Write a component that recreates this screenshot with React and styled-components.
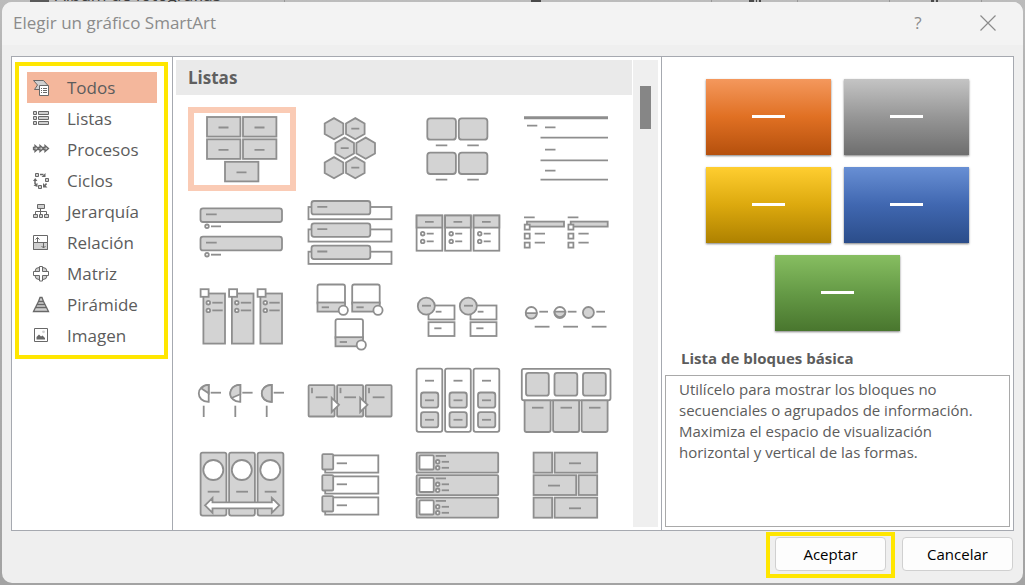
import { useState } from "react";
import styled, { createGlobalStyle } from "styled-components";

const STEPS = [0, 28.5, 57];

const Box = ({ x, y, r = 0, plain }) => (
  <rect x={x[0]} y={y[0]} width={x[1] - x[0]} height={y[1] - y[0]} rx={r} className={plain ? "plain" : undefined} />
);

const Dash = ({ x, y }) => <path d={`M${x[0]} ${y}H${x[1]}`} />;

const Bullet = ({ x, y, to }) => (
  <>
    <circle cx={x} cy={y} r="1.8" className="plain" />
    <Dash x={[x + 4, to]} y={y} />
  </>
);

const Hexagon = ({ x, y, dash }) => (
  <>
    <path d={`M${x} ${y - 10.6}l9.3 5.3v10.6l-9.3 5.3l-9.3 -5.3v-10.6z`} />
    {dash && <Dash x={[x - 4, x + 4]} y={y} />}
  </>
);

const Repeat = ({ steps = STEPS, dy = 0, children }) =>
  steps.map((step) => (
    <g key={step} transform={dy ? `translate(0 ${step})` : `translate(${step} 0)`}>
      {children}
    </g>
  ));

const LAYOUTS = [
  {
    name: "Lista de bloques básica",
    art: (
      <>
        {[[19, 10], [55, 10], [19, 32.3], [55, 32.3], [37, 54.8]].map(([x, y]) => (
          <g key={`${x}-${y}`}>
            <Box x={[x, x + 33.4]} y={[y, y + 19.6]} />
            <Dash x={[x + 11.5, x + 21.5]} y={y + 10.5} />
          </g>
        ))}
      </>
    ),
  },
  {
    name: "Hexágonos alternados",
    art: (
      <>
        <Hexagon x={38} y={21.7} />
        <Hexagon x={59.3} y={21.7} dash />
        <Hexagon x={48.7} y={41.2} dash />
        <Hexagon x={69.7} y={41.2} />
        <Hexagon x={38} y={60.7} />
        <Hexagon x={59.3} y={60.7} dash />
      </>
    ),
  },
  {
    name: "Lista de imágenes con títulos",
    art: (
      <>
        {[[23.3, 11.3], [54.8, 11.3], [23.3, 45.6], [54.8, 45.6]].map(([x, y]) => (
          <g key={`${x}-${y}`}>
            <Box x={[x, x + 28.6]} y={[y, y + 21.4]} r={3} />
            <Dash x={[x + 8.5, x + 20]} y={y + 27} />
          </g>
        ))}
      </>
    ),
  },
  {
    name: "Lista con líneas",
    art: (
      <>
        <path d="M12 10.7H96" className="thick" />
        <Dash x={[15, 25.3]} y={18.7} />
        {[20.3, 42.7, 63.7].map((y) => (
          <Dash key={y} x={[33, 43.5]} y={y} />
        ))}
        <path d="M28.5 30.7H96M28.5 53.3H96M28.5 72.7H96" />
      </>
    ),
  },
  {
    name: "Lista con viñetas verticales",
    art: (
      <Repeat steps={[0, 28.4]} dy={1}>
        <Box x={[12.5, 94]} y={[17.3, 31]} r={2.5} />
        <Dash x={[18, 28.7]} y={23.3} />
        <Bullet x={19} y={35.3} to={33} />
      </Repeat>
    ),
  },
  {
    name: "Lista de cuadros vertical",
    art: (
      <Repeat steps={[0, 22.4, 44.7]} dy={1}>
        <Box x={[12.5, 95.5]} y={[16, 28.2]} plain />
        <Box x={[15.5, 74.3]} y={[10, 23.4]} r={2.5} />
        <Dash x={[21.3, 31.3]} y={15.8} />
      </Repeat>
    ),
  },
  {
    name: "Lista horizontal con viñetas",
    art: (
      <Repeat>
        <Box x={[12.6, 38.3]} y={[24.5, 59.7]} plain />
        <Box x={[12.6, 38.3]} y={[24.5, 36.6]} />
        <Dash x={[21, 29.7]} y={30.8} />
        <Bullet x={18.7} y={42.7} to={29.7} />
        <Bullet x={18.7} y={50.4} to={29.7} />
      </Repeat>
    ),
  },
  {
    name: "Lista de acentos cuadrados",
    art: (
      <Repeat steps={[0, 43.7]}>
        <Dash x={[12, 22.7]} y={26.3} />
        <Box x={[15, 52]} y={[30.6, 35.6]} />
        <Box x={[12.7, 17.7]} y={[33.6, 38.6]} plain />
        <Box x={[12.7, 17.7]} y={[42.6, 47.6]} plain />
        <Box x={[12.7, 17.7]} y={[51.6, 56.6]} plain />
        <Dash x={[22.7, 33]} y={42.7} />
        <Dash x={[22.7, 33]} y={51.7} />
      </Repeat>
    ),
  },
  {
    name: "Lista de énfasis con imágenes",
    art: (
      <Repeat>
        <Box x={[15.4, 37]} y={[18.5, 68.6]} />
        <Box x={[12.6, 20.6]} y={[14.2, 21.8]} plain />
        <Bullet x={20.3} y={27.7} to={34.7} />
        <Bullet x={20.3} y={35.4} to={34.7} />
      </Repeat>
    ),
  },
  {
    name: "Lista de imágenes curvadas",
    art: (
      <>
        {[[0, 0], [34.7, 0], [18, 34.7]].map(([x, y]) => (
          <g key={x} transform={`translate(${x} ${y})`}>
            <Box x={[21.5, 49]} y={[9.5, 30]} r={2} plain />
            <Box x={[21.5, 49]} y={[27.5, 36.6]} />
            <Dash x={[25.7, 33]} y={32.3} />
            <circle cx="47.3" cy="35.3" r="4.6" className="plain" />
          </g>
        ))}
      </>
    ),
  },
  {
    name: "Lista con círculos apilados",
    art: (
      <Repeat steps={[0, 42]}>
        <Box x={[24.5, 50.5]} y={[30.5, 44.5]} plain />
        <Box x={[24.5, 50.5]} y={[47.2, 61]} plain />
        <circle cx="22.3" cy="31.2" r="8.5" />
        <Dash x={[18, 27]} y={30.7} />
        <Dash x={[31.7, 37.5]} y={36.7} />
        <Dash x={[30.3, 37.5]} y={53.3} />
      </Repeat>
    ),
  },
  {
    name: "Proceso de círculo creciente",
    art: (
      <>
        <Repeat>
          <Dash x={[27.3, 36]} y={36.7} />
          <Dash x={[22.7, 37.5]} y={51.7} />
        </Repeat>
        <circle cx="19.3" cy="37.5" r="5.5" className="plain" />
        <path d="M13.8 38.2A5.5 5.5 0 0 0 24.8 38.2Z" />
        <circle cx="47.9" cy="37.5" r="5.5" className="plain" />
        <path d="M42.4 36.6A5.5 5.5 0 1 0 53.4 36.6Z" />
        <circle cx="76.4" cy="37.5" r="5.5" />
      </>
    ),
  },
  {
    name: "Proceso circular parcial",
    art: (
      <>
        <Repeat steps={[0, 31.6, 63]}>
          <path d="M20.7 25.9C7.5 26 7.5 43 20.7 42.8Z" className="plain" />
          <Dash x={[22.7, 33]} y={33.7} />
          <path d="M15.7 46.7V58" />
        </Repeat>
        <path d="M20.7 25.9C17 26 15 27.5 13.5 29.5L20.7 34.3Z" />
        <path d="M52.3 25.9C42.5 26 40.5 34.5 43.6 39L52.3 35.2Z" />
        <path d="M83.7 25.9C70.5 26 70.5 43 83.7 42.8Z" />
      </>
    ),
  },
  {
    name: "Proceso de bloques",
    art: (
      <>
        <Repeat>
          <Box x={[12.6, 38.6]} y={[26.2, 57.5]} r={1} />
          <Dash x={[19.7, 31.5]} y={38.3} />
          <path d="M16 28.8V34.2" />
        </Repeat>
        <Repeat steps={[0, 28.5]}>
          <path d="M35.7 38.8L43 45.8L35.7 53Z" className="plain" />
        </Repeat>
      </>
    ),
  },
  {
    name: "Lista agrupada",
    art: (
      <Repeat>
        <Box x={[12.6, 38.3]} y={[9.6, 72.8]} r={2} plain />
        <Dash x={[21, 30]} y={21.7} />
        <Box x={[17, 34.3]} y={[33.5, 48.7]} r={2.5} />
        <Box x={[17, 34.3]} y={[53.1, 68.4]} r={2.5} />
        <Dash x={[21, 30]} y={41.3} />
        <Dash x={[21, 30]} y={60.8} />
      </Repeat>
    ),
  },
  {
    name: "Lista horizontal de imágenes",
    art: (
      <>
        <Box x={[9.8, 98.5]} y={[9.8, 41.3]} r={2} plain />
        <Repeat>
          <Box x={[14, 36.8]} y={[13.9, 36.7]} r={2.5} />
          <path d="M12.6 41.3H38.6V71A2 2 0 0 1 36.6 73H14.6A2 2 0 0 1 12.6 71Z" />
          <Dash x={[20, 31.5]} y={48.7} />
        </Repeat>
      </>
    ),
  },
  {
    name: "Lista de imágenes continua",
    art: (
      <>
        <Repeat>
          <Box x={[12.6, 38.4]} y={[9.6, 72.6]} r={2} />
          <circle cx="25.3" cy="27" r="10" className="plain" />
          <Dash x={[19.7, 31.5]} y={48.7} />
        </Repeat>
        <path
          d="M17 62.3L24.5 54.9V59.3H83.8V54.9L91.3 62.3L83.8 69.8V65.3H24.5V69.8Z"
          className="plain"
        />
      </>
    ),
  },
  {
    name: "Lista vertical con etiquetas",
    art: (
      <Repeat steps={[0, 21, 42]} dy={1}>
        <Box x={[29.2, 82.3]} y={[12.4, 29.6]} plain />
        <Box x={[26.3, 37.2]} y={[11.2, 26.5]} r={1} />
        <Dash x={[40.7, 51]} y={20.3} />
      </Repeat>
    ),
  },
  {
    name: "Lista vertical de imágenes",
    art: (
      <Repeat steps={[0, 22.5, 45]} dy={1}>
        <Box x={[12.6, 94.2]} y={[9.6, 29.7]} r={1} />
        <Box x={[15.5, 29.7]} y={[12.4, 26.5]} r={1} plain />
        <Dash x={[31.7, 42]} y={12.9} />
        <Bullet x={33.7} y={18.8} to={45} />
        <Bullet x={33.7} y={24.8} to={45} />
      </Repeat>
    ),
  },
  {
    name: "Lista de bloques alternados",
    art: (
      <>
        <Repeat steps={[0, 45]} dy={1}>
          <Box x={[21.6, 40.1]} y={[9.6, 29.7]} />
          <Box x={[42.6, 85.2]} y={[9.6, 29.7]} />
          <Dash x={[57, 69]} y={20.3} />
        </Repeat>
        <Box x={[21.6, 64.2]} y={[32.2, 52]} />
        <Box x={[66.6, 85.2]} y={[32.2, 52]} />
        <Dash x={[36, 48]} y={42.6} />
      </>
    ),
  },
];

const CATEGORIES = [
  {
    label: "Todos",
    icon: (
      <>
        <path d="M.5 .5H10.5L15 5.5L10.5 9.5H1.5L4.5 5Z" />
        <path d="M6.5 5.5H15.5V15.5H6.5Z" className="plain" />
        <path d="M8 8.5H9M10 8.5H14M8 10.5H9M10 10.5H14M8 12.5H9M10 12.5H14" />
      </>
    ),
  },
  {
    label: "Listas",
    icon: (
      <path d="M.5 .5H3.5V3.5H.5ZM5.5 .5H15.5V3.5H5.5ZM.5 5.5H3.5V8.5H.5ZM5.5 5.5H15.5V8.5H5.5ZM.5 10.5H3.5V13.5H.5ZM5.5 10.5H15.5V13.5H5.5Z" />
    ),
  },
  {
    label: "Procesos",
    icon: (
      <g strokeWidth="1.3">
        <path d="M.5 5.5H2V3.5L5.5 6.5L2 9.5V7.5H.5Z" />
        <path d="M5.5 5.5H7V3.5L10.5 6.5L7 9.5V7.5H5.5Z" />
        <path d="M10.5 5.5H12V3.5L15.5 6.5L12 9.5V7.5H10.5Z" />
      </g>
    ),
  },
  {
    label: "Ciclos",
    icon: (
      <>
        <path d="M2.5 .5H5.5V3.5H2.5ZM12.5 5.5H15.5V8.5H12.5ZM5.5 12.5H8.5V15.5H5.5Z" />
        <path d="M7 1.5H10.5M13.5 10.5L12 12.5M2 7V10.5L3.5 12.5" strokeWidth="1.5" className="line" />
        <path d="M12.5 0V4H8.5ZM10 10V14.5H14.5ZM.5 12.5L4.5 10V14ZM0 8L2.2 5L4.4 8Z" className="solid" />
      </>
    ),
  },
  {
    label: "Jerarquía",
    icon: (
      <>
        <path d="M7.5 4.5V10.5M2.5 10.5V7.5H13.5V10.5" className="line" />
        <path d="M4.5 .5H11.5V4.5H4.5ZM.5 10.5H4.5V13.5H.5ZM6.5 10.5H9.5V13.5H6.5ZM11.5 10.5H15.5V13.5H11.5Z" />
      </>
    ),
  },
  {
    label: "Relación",
    icon: (
      <>
        <path d="M.5 .5H14.5V14.5H.5Z" className="plain" />
        <path d="M.5 7.5H14.5V14.5H.5Z" />
        <path d="M4.5 7V2.5M2.5 4.5L4.5 2.5L6.5 4.5M10.5 8V13M8.5 11L10.5 13L12.5 11" className="line" />
      </>
    ),
  },
  {
    label: "Matriz",
    icon: (
      <>
        <rect x="2" y="1.5" width="12" height="12" rx="4" />
        <path d="M6.5 .5H9.5V5.5H15.5V9.5H9.5V15H6.5V9.5H.5V5.5H6.5Z" className="plain" />
      </>
    ),
  },
  {
    label: "Pirámide",
    icon: (
      <path
        d="M7 .5H9L10.5 4.5H5.5ZM5.5 4.5H10.5L12 7.5H4ZM4 7.5H12L13.5 10.5H2.5ZM2.5 10.5H13.5L15.5 14.5H.5Z"
        strokeWidth="1.3"
      />
    ),
  },
  {
    label: "Imagen",
    icon: (
      <>
        <path d="M1.5 .5H14.5V13.5H1.5Z" className="plain" />
        <circle cx="10.5" cy="3.8" r="1.4" stroke="none" />
        <path d="M3.5 11.5V9L6 6.5L8 8.5L9.5 7.5L12 10V11.5Z" className="solid" />
      </>
    ),
  },
];

const PREVIEW_TILES = [
  "#f4985d, #e07023 50%, #b5500d",
  "#c4c4c4, #969696 50%, #6e6e6e",
  "#ffce30, #dca90e 50%, #ae8100",
  "#688fd4, #4067b0 50%, #2b4d8a",
  "#87be61, #659a46 50%, #49762e",
];

const App = () => {
  const [category, setCategory] = useState("Todos");
  const [layout, setLayout] = useState(LAYOUTS[0].name);

  return (
    <Page>
      <GlobalStyle />
      <Ribbon aria-hidden="true">
        <RibbonIcon />
        <RibbonLabel>Álbum de fotografías</RibbonLabel>
        <RibbonMarks>
          <path d="M53.5 0V2M480.5 0V2M566.5 0V2M658.5 0V2M750.5 0V2" stroke="#979797" />
          <path d="M300 1H310M518 1H523M525 1H526M528 1H530M700 1H703M705 1H707" stroke="#4a4a4a" strokeWidth="2" />
        </RibbonMarks>
      </Ribbon>
      <Dialog role="dialog" aria-labelledby="dialog-title">
        <TitleBar>
          <Title id="dialog-title">Elegir un gráfico SmartArt</Title>
          <TitleButton aria-label="Ayuda">?</TitleButton>
          <TitleButton aria-label="Cerrar">
            <svg width="16" height="16" viewBox="0 0 16 16" stroke="currentColor" strokeWidth="1.2">
              <path d="M.5 .5L15.5 15.5M15.5 .5L.5 15.5" />
            </svg>
          </TitleButton>
        </TitleBar>
        <Panels>
          <Sidebar>
            <Highlight>
              {CATEGORIES.map(({ label, icon }) => (
                <Category
                  key={label}
                  $active={label === category}
                  aria-pressed={label === category}
                  onClick={() => setCategory(label)}
                >
                  <CategoryIcon viewBox="0 0 16 16">{icon}</CategoryIcon>
                  {label}
                </Category>
              ))}
            </Highlight>
          </Sidebar>
          <Gallery>
            <GalleryMain>
              <GalleryTitle>Listas</GalleryTitle>
              <Grid>
                {LAYOUTS.map(({ name, art }) => (
                  <Cell
                    key={name}
                    $active={name === layout}
                    aria-label={name}
                    aria-pressed={name === layout}
                    onClick={() => setLayout(name)}
                  >
                    <Thumb viewBox="0 0 108 84">{art}</Thumb>
                  </Cell>
                ))}
              </Grid>
            </GalleryMain>
            <ScrollTrack>
              <ScrollThumb />
            </ScrollTrack>
          </Gallery>
          <Preview>
            <Tiles>
              {PREVIEW_TILES.map((stops) => (
                <Tile key={stops} $stops={stops}>
                  <TileBar />
                </Tile>
              ))}
            </Tiles>
            <PreviewTitle>Lista de bloques básica</PreviewTitle>
            <Description>
              Utilícelo para mostrar los bloques no secuenciales o agrupados de
              información. Maximiza el espacio de visualización horizontal y
              vertical de las formas.
            </Description>
          </Preview>
        </Panels>
        <Footer>
          <ButtonHighlight>
            <Button>Aceptar</Button>
          </ButtonHighlight>
          <Button>Cancelar</Button>
        </Footer>
      </Dialog>
    </Page>
  );
};

const GlobalStyle = createGlobalStyle`
  * {
    box-sizing: border-box;
  }

  body {
    margin: 0;
    font-family: "Open Sans", "Noto Sans", sans-serif;
    color: #5c5c5c;
  }

  button {
    font-family: inherit;
    cursor: pointer;
  }
`;

const Page = styled.div`
  min-height: 100vh;
  display: flex;
  flex-direction: column;
  padding: 0 2px 2px;
  background: linear-gradient(#bcbcbc, #b4b4b4 60px, #a3a3a3);
`;

const Ribbon = styled.div`
  height: 2px;
  padding-left: 28px;
  overflow: hidden;
  display: flex;
  align-items: flex-end;
  gap: 6px;
  color: #3c3c3c;
  font-size: 17px;
  line-height: 14px;
`;

const RibbonIcon = styled.i`
  width: 19px;
  height: 2px;
  background: #5a5a5a;
`;

const RibbonLabel = styled.span`
  flex: 0 0 170px;
`;

const RibbonMarks = styled.svg`
  flex: 1;
  height: 2px;
`;

const Dialog = styled.div`
  flex: 1;
  display: flex;
  flex-direction: column;
  border-radius: 10px;
  overflow: hidden;
  background: #efefef;
`;

const TitleBar = styled.header`
  height: 43px;
  padding: 0 15px 2px 11px;
  display: flex;
  align-items: center;
  gap: 30px;
  background: #f3f3f3;
  color: #8b8b8b;
`;

const Title = styled.h1`
  flex: 1;
  margin: 0;
  font-size: 17px;
  font-weight: 400;
`;

const TitleButton = styled.button`
  width: 40px;
  height: 40px;
  padding: 0;
  border: none;
  background: none;
  color: inherit;
  display: flex;
  align-items: center;
  justify-content: center;
  font-size: 17px;
`;

const Panels = styled.div`
  flex: 1;
  display: flex;
  margin: 11px 9px 0;
  border: 1px solid #a6a9b0;
  background: white;
`;

const Sidebar = styled.nav`
  flex: 0 0 161px;
  padding: 5px 4px 5px 3px;
  border-right: 1px solid #a6a9b0;
`;

const Highlight = styled.div`
  padding: 6px 7px 4px 8px;
  border: 4px solid #ffe600;
`;

const Category = styled.button`
  width: 100%;
  height: 31px;
  padding: 0 0 0 6px;
  border: none;
  background: ${(props) => (props.$active ? "#f4b79c" : "transparent")};
  color: inherit;
  display: flex;
  align-items: center;
  gap: 18px;
  font-size: 17px;
  text-align: left;
`;

const CategoryIcon = styled.svg`
  width: 16px;
  height: 16px;
  flex-shrink: 0;
  overflow: visible;
  stroke: #686868;
  fill: #d0d0d0;

  .plain {
    fill: white;
  }

  .line {
    fill: none;
  }

  .solid {
    fill: #686868;
    stroke: none;
  }
`;

const Gallery = styled.section`
  flex: 1;
  min-width: 0;
  padding: 3px;
  display: flex;
  gap: 1px;
`;

const GalleryMain = styled.div`
  flex: 1;
  min-width: 0;
`;

const GalleryTitle = styled.h2`
  height: 35px;
  margin: 0;
  padding-left: 12px;
  display: flex;
  align-items: center;
  background: #eaeaea;
  color: #606060;
  font-size: 17px;
  font-weight: 700;
`;

const Grid = styled.div`
  padding: 12px 12px 0;
  display: grid;
  grid-template-columns: repeat(auto-fill, 108px);
`;

const Cell = styled.button`
  height: 84px;
  padding: 0;
  border: none;
  background: white;
  box-shadow: ${(props) => (props.$active ? "inset 0 0 0 6px #facbb5" : "none")};
`;

const Thumb = styled.svg`
  display: block;
  width: 108px;
  height: 84px;
  fill: #d3d3d3;
  stroke: #8e8e8e;
  stroke-width: 1.8;

  .plain {
    fill: white;
  }

  .thick {
    stroke-width: 3;
  }
`;

const ScrollTrack = styled.div`
  flex: 0 0 25px;
  padding: 26px 7px;
  background: #efefef;
`;

const ScrollThumb = styled.div`
  height: 43px;
  background: #868686;
`;

const Preview = styled.section`
  flex: 0 0 352px;
  padding: 22px 3px 3px;
  border-left: 1px solid #a6a9b0;
  display: flex;
  flex-direction: column;
`;

const Tiles = styled.div`
  display: flex;
  flex-wrap: wrap;
  justify-content: center;
  gap: 12px 13px;
  padding: 0 30px;
`;

const Tile = styled.div`
  width: 125px;
  height: 76px;
  padding-bottom: 2px;
  display: flex;
  align-items: center;
  justify-content: center;
  background: linear-gradient(${(props) => props.$stops});
  box-shadow: 0 1px 2px rgba(0, 0, 0, 0.5);
`;

const TileBar = styled.div`
  width: 33px;
  height: 3px;
  background: white;
`;

const PreviewTitle = styled.h3`
  margin: 16px 0 6px;
  padding-left: 16px;
  font-size: 15px;
  font-weight: 700;
  line-height: 22px;
`;

const Description = styled.p`
  flex: 1;
  margin: 0;
  padding: 3px 32px 3px 13px;
  border: 1px solid #a9a9a9;
  font-size: 15px;
  line-height: 21px;
`;

const Footer = styled.footer`
  padding: 1px 10px 5px;
  display: flex;
  align-items: flex-start;
  justify-content: flex-end;
  gap: 7px;

  & > button {
    margin-top: 5px;
  }
`;

const ButtonHighlight = styled.div`
  padding: 1px 5px 3px;
  border: 4px solid #ffe600;
`;

const Button = styled.button`
  display: block;
  width: 111px;
  height: 34px;
  padding: 0;
  border: 1px solid #d0d0d0;
  border-radius: 4px;
  background: #fdfdfd;
  color: black;
  font-size: 15px;
`;

export default App;
